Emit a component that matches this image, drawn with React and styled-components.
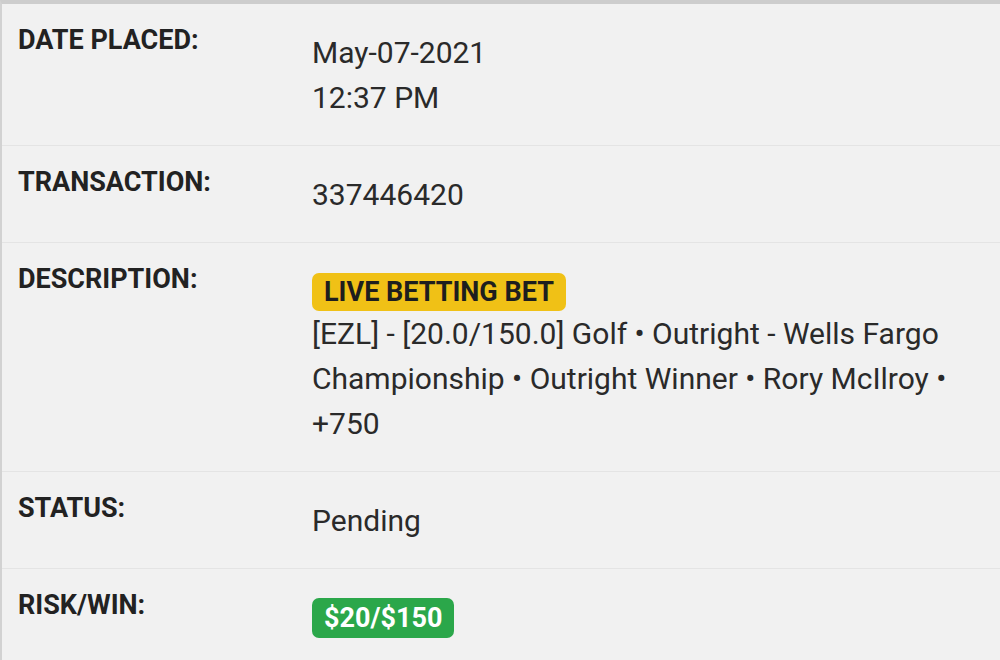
import styled, { createGlobalStyle } from 'styled-components';

const GlobalStyle = createGlobalStyle`
  html, body {
    margin: 0;
    padding: 0;
    background: #f1f1f1;
  }
  body {
    font-family: Roboto, 'Liberation Sans', sans-serif;
  }
`;

const details = [
  { label: 'DATE PLACED:', lines: ['May-07-2021', '12:37 PM'] },
  { label: 'TRANSACTION:', lines: ['337446420'] },
  {
    label: 'DESCRIPTION:',
    badge: 'LIVE BETTING BET',
    lines: ['[EZL] - [20.0/150.0] Golf • Outright - Wells Fargo Championship • Outright Winner • Rory McIlroy • +750'],
  },
  { label: 'STATUS:', lines: ['Pending'] },
  { label: 'RISK/WIN:', amount: '$20/$150' },
];

const App = () => (
  <>
    <GlobalStyle />
    <Panel>
      {details.map((row) => (
        <Row key={row.label}>
          <Label>{row.label}</Label>
          <Value>
            {row.badge && <Badge>{row.badge}</Badge>}
            {row.lines && row.lines.map((line) => <Line key={line}>{line}</Line>)}
            {row.amount && <Amount>{row.amount}</Amount>}
          </Value>
        </Row>
      ))}
    </Panel>
  </>
);

export default App;

const Panel = styled.div`
  width: 1000px;
  height: 660px;
  box-sizing: border-box;
  border-top: 4px solid #cdcdcd;
  border-left: 2px solid #d2d2d2;
  background: #f1f1f1;
  overflow: hidden;
`;

const Row = styled.div`
  display: grid;
  grid-template-columns: 294px 1fr;
  padding: 21px 18px 25px 16px;
  border-bottom: 1px solid #e4e4e4;
`;

const Label = styled.div`
  font-size: 27px;
  line-height: 30px;
  font-weight: 700;
  color: #222;
`;

const Value = styled.div`
  margin-top: 5px;
  font-size: 30px;
  line-height: 45px;
  color: #2a2a2a;
  display: flex;
  flex-direction: column;
  align-items: flex-start;
`;

const Line = styled.div``;

const Badge = styled.span`
  margin-top: 4px;
  background: #f0c116;
  color: #1e1e1e;
  font-weight: 700;
  font-size: 27px;
  line-height: 38px;
  padding: 0 12px;
  border-radius: 7px;
`;

const Amount = styled.span`
  margin-top: 3px;
  background: #2ba74a;
  color: #fff;
  font-weight: 700;
  font-size: 27px;
  line-height: 40px;
  padding: 0 12px;
  border-radius: 7px;
`;
